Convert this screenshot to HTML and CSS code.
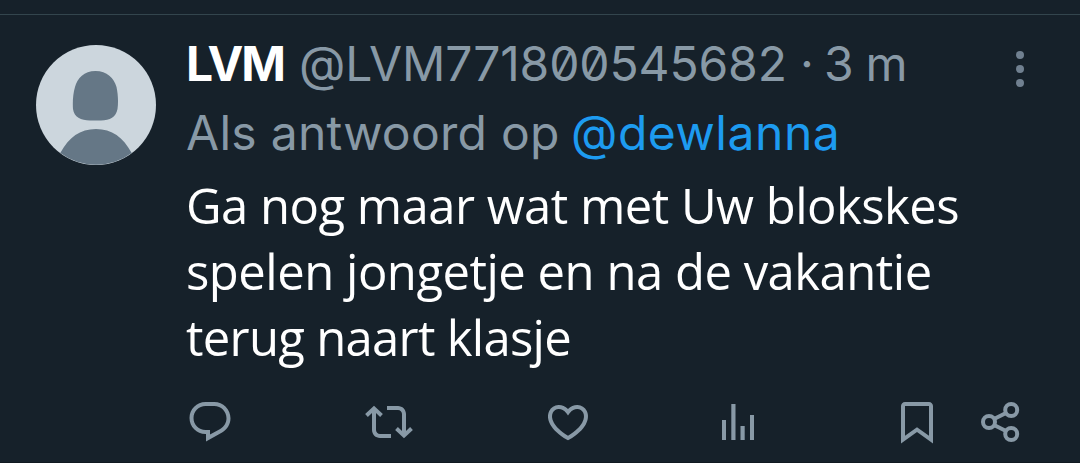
FILE: index.html
```html
<!DOCTYPE html>
<html lang="nl">
<head>
<meta charset="utf-8">
<title>LVM</title>
<link rel="stylesheet" href="styles.css">
</head>
<body>
<article class="tweet">
  <svg class="avatar" viewBox="0 0 120 120">
    <circle class="avatar-bg" cx="60" cy="60" r="60"/>
    <path class="avatar-figure" d="M59.500 26C71 26 78 33 80.500 42C82 49 82.500 57 81.500 64C80 72 74 75.500 65 75.500H54C45 75.500 38 72 37 64C36.500 57 37 49 39 42C41.500 33 48 26 59.500 26ZM24.300 108C33 92 44 84 60 84S87 92 95.700 108A60 60 0 0 1 24.300 108Z"/>
  </svg>
  <div class="content">
    <header class="header">
      <div class="identity"><span class="name">LVM</span><span class="handle">@LVM771800545682</span><span class="dot">·</span><span class="time">3 m</span></div>
      <svg class="more" viewBox="0 0 8 36"><circle cx="4" cy="4" r="4"/><circle cx="4" cy="18" r="4"/><circle cx="4" cy="32" r="4"/></svg>
    </header>
    <div class="reply-to"><span class="reply-label">Als antwoord op</span><a class="mention">@dewlanna</a></div>
    <div class="text">
      <div class="line line-1">Ga nog maar wat met Uw blokskes</div>
      <div class="line line-2">spelen jongetje en na de vakantie</div>
      <div class="line line-3">terug naart klasje</div>
    </div>
    <div class="actions">
      <svg class="icon" viewBox="0 0 24 24"><path d="M1.751 10c0-4.42 3.584-8 8.005-8h4.366c4.490 0 8.129 3.640 8.129 8.130 0 2.960-1.607 5.680-4.196 7.110l-8.054 4.460v-3.690h-.067c-4.490.1-8.183-3.510-8.183-8.010zm8.005-6c-3.317 0-6.005 2.690-6.005 6 0 3.370 2.770 6.080 6.138 6.010l.351-.01h1.761v2.300l5.087-2.810c1.951-1.080 3.163-3.130 3.163-5.360 0-3.390-2.744-6.130-6.129-6.130H9.756z"/></svg>
      <svg class="icon" viewBox="0 0 24 24"><path d="M4.500 3.880l4.432 4.140-1.364 1.460L5.500 7.550V16c0 1.100.896 2 2 2H13v2H7.500c-2.209 0-4-1.790-4-4V7.550L1.432 9.480.068 8.020 4.500 3.880zM16.500 6H11V4h5.500c2.209 0 4 1.790 4 4v8.450l2.068-1.930 1.364 1.460-4.432 4.140-4.432-4.140 1.364-1.460 2.068 1.930V8c0-1.100-.896-2-2-2z"/></svg>
      <svg class="icon" viewBox="0 0 24 24"><path d="M16.697 5.500c-1.222-.06-2.679.51-3.890 2.160l-.805 1.090-.806-1.090C9.984 6.010 8.526 5.440 7.304 5.500c-1.243.07-2.349.78-2.910 1.910-.552 1.120-.633 2.780.479 4.820 1.074 1.970 3.257 4.270 7.129 6.610 3.870-2.340 6.052-4.640 7.126-6.610 1.111-2.040 1.030-3.700.477-4.820-.561-1.130-1.666-1.840-2.908-1.910zm4.187 7.690c-1.351 2.480-4.001 5.120-8.379 7.670l-.503.300-.504-.300c-4.379-2.550-7.029-5.190-8.382-7.670-1.360-2.500-1.410-4.860-.514-6.670.887-1.790 2.647-2.910 4.601-3.010 1.651-.09 3.368.560 4.798 2.010 1.429-1.450 3.146-2.100 4.796-2.010 1.954.100 3.714 1.220 4.601 3.010.896 1.810.846 4.170-.514 6.670z"/></svg>
      <svg class="icon" viewBox="0 0 48 48"><path d="M8 22h4v20H8zM17.300 6h4.200v36h-4.200zM26.500 28h4.200v14h-4.200zM36 17h4v25h-4z"/></svg>
      <svg class="icon" viewBox="0 0 24 24"><path d="M4 4C4 2.900 4.900 2 6 2h12c1.100 0 2 .9 2 2v18.700l-8-5.700-8 5.700V4zM6 4v14.900l6-4.300 6 4.300V4H6z"/></svg>
      <svg class="icon" viewBox="0 0 48 48"><g class="share"><path d="M17 21L30 14.500M17 27L30 33.500"/><circle cx="12" cy="24" r="6"/><circle cx="34.200" cy="12" r="6"/><circle cx="34.200" cy="36" r="6"/></g></svg>
    </div>
  </div>
</article>
</body>
</html>
```
FILE: styles.css
```css
body {
  margin: 0;
  padding-top: 14px;
  background: #16212a;
  overflow: hidden;
}
.tweet {
  display: flex;
  box-sizing: border-box;
  height: 449px;
  padding: 0 36px;
  border-top: 1px solid #33454d;
  border-bottom: 1px solid #101920;
  font: 48px/68px Inter, "Liberation Sans", sans-serif;
  font-feature-settings: "zero" 1;
  color: #8899a6;
  white-space: nowrap;
}
.avatar {
  flex: none;
  width: 120px;
  height: 120px;
  margin: 30px 30px 0 0;
}
.avatar-bg { fill: #ccd6dd; }
.avatar-figure { fill: #657786; }
.content {
  flex: 1;
  padding-top: 15px;
}
.header {
  display: flex;
  justify-content: space-between;
  height: 69px;
}
.identity, .reply-to { display: flex; }
.name {
  width: 113px;
  font-weight: 700;
  letter-spacing: -2px;
  color: #fff;
}
.handle {
  width: 501px;
  letter-spacing: -0.13px;
}
.dot { width: 24px; }
.time { letter-spacing: -0.8px; }
.more {
  width: 8px;
  height: 36px;
  margin: 21px 20px 0 0;
  fill: #708090;
}
.reply-to { height: 73px; }
.reply-label {
  width: 385px;
  letter-spacing: 0.27px;
}
.mention {
  letter-spacing: 0.55px;
  color: #1d9bf0;
}
.text {
  font-family: "Open Sans", "Noto Sans", sans-serif;
  font-size: 49px;
  line-height: 66px;
  color: #fff;
}
.line-1 { letter-spacing: -0.53px; }
.line-2 { letter-spacing: -0.5px; }
.line-3 { letter-spacing: -0.7px; }
.actions {
  display: grid;
  grid-template-columns: 179px 179px 170px 179px 84px 48px;
  margin-top: 28px;
}
.icon {
  width: 48px;
  height: 48px;
  fill: #8899a6;
}
.share {
  fill: none;
  stroke: #8899a6;
  stroke-width: 4;
}
```
